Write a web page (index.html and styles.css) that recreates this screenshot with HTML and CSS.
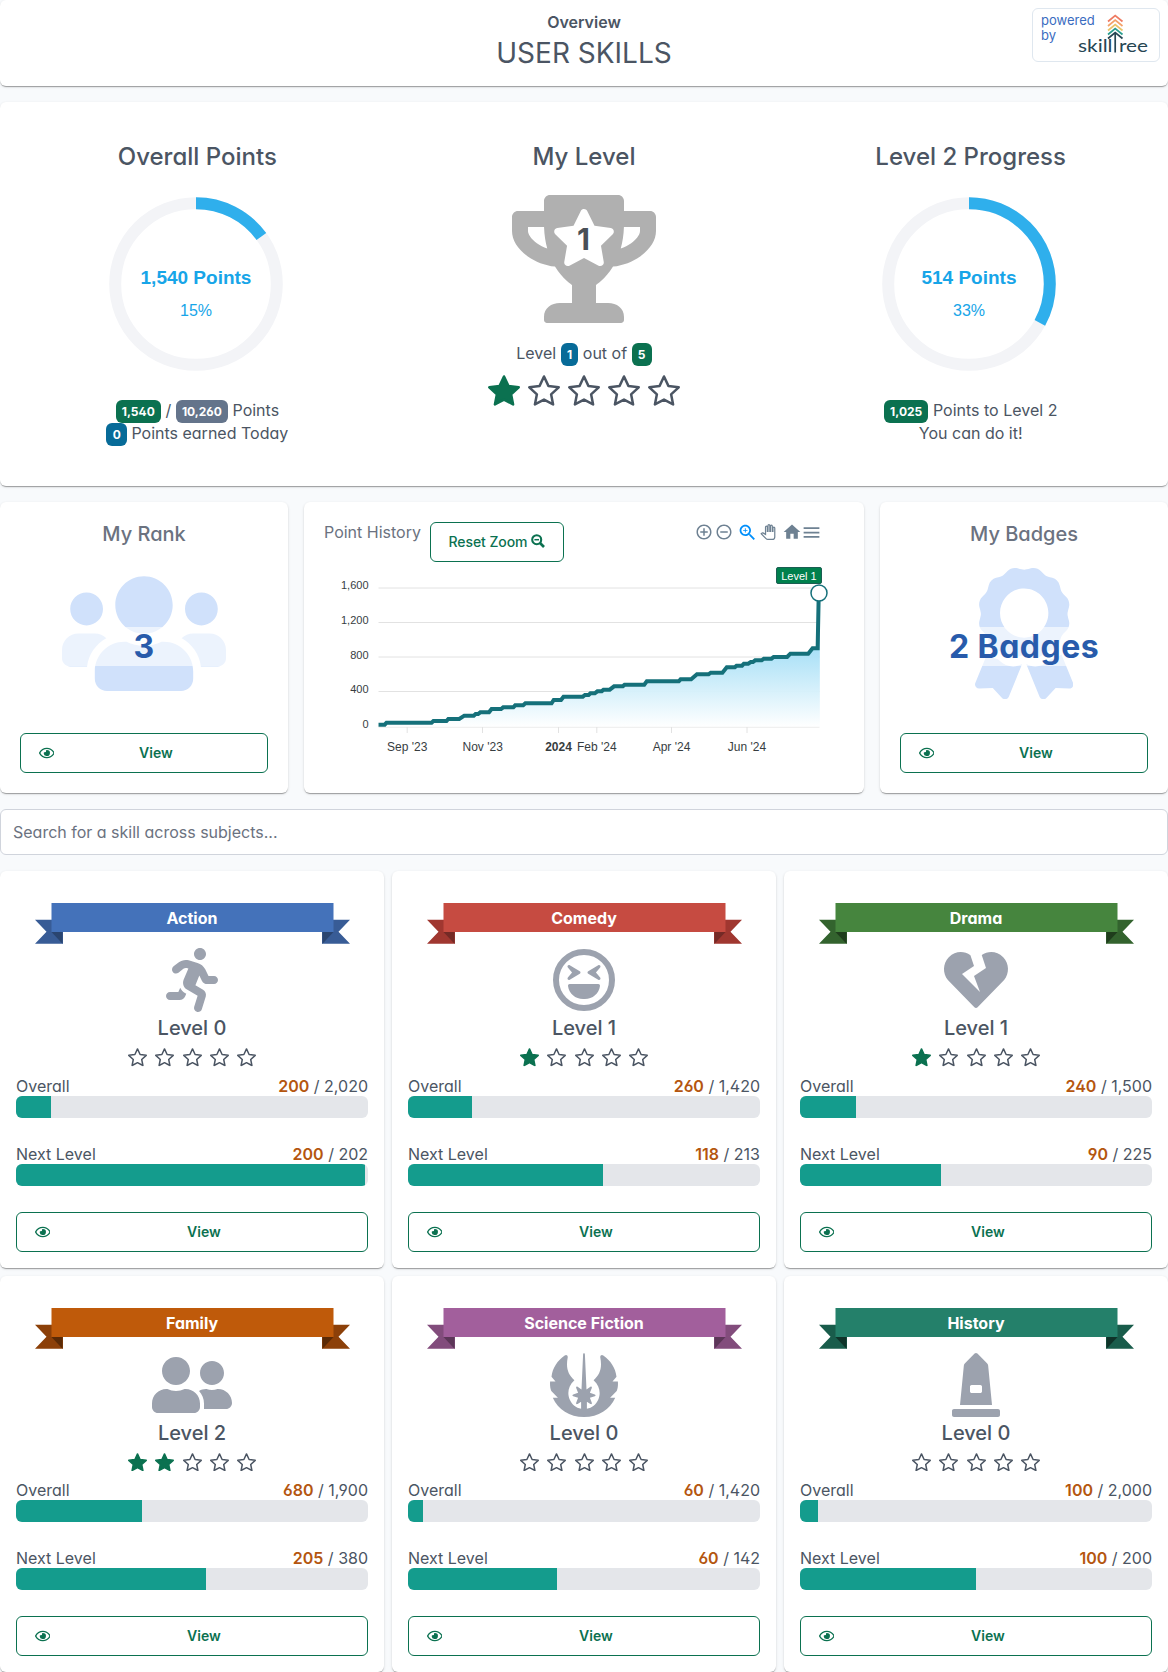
FILE: index.html
```html
<!DOCTYPE html>
<html lang="en">
<head>
<meta charset="utf-8">
<title>User Skills</title>
<link rel="stylesheet" href="styles.css">
</head>
<body>
<svg class="sprite" aria-hidden="true">
  <symbol id="star" viewBox="0 0 32 31"><path d="M16 1.5 20.4 10.9 30.7 12.3 23.1 19.3 25.1 29.4 16 24.6 6.9 29.4 8.9 19.3 1.3 12.3 11.6 10.9Z"/></symbol>
  <symbol id="eye" viewBox="0 0 576 512"><path d="M288 144a110.94 110.94 0 0 0-31.24 5 55.4 55.4 0 0 1 7.24 27 56 56 0 0 1-56 56 55.4 55.4 0 0 1-27-7.24A111.71 111.71 0 1 0 288 144zm284.52 97.4C518.29 135.59 410.93 64 288 64S57.68 135.64 3.48 241.41a32.35 32.35 0 0 0 0 29.19C57.71 376.41 165.07 448 288 448s230.32-71.64 284.52-177.41a32.35 32.35 0 0 0 0-29.19zM288 400c-98.65 0-189.09-55-237.93-144C98.91 167 189.34 112 288 112s189.09 55 237.93 144C477.1 345 386.66 400 288 400z"/></symbol>
  <symbol id="ribbon" viewBox="0 0 315 41">
    <path class="tail" d="M0 16.800H28V40.800H0L11.500 28.800ZM315 16.800H287V40.800H315L303.500 28.800Z"/>
    <path class="fold" d="M16.500 29H27.500V40.800ZM298.500 29H287.500V40.800Z"/>
    <path class="band" d="M16.500 0H298.500V29H16.500Z"/>
  </symbol>
  <symbol id="running" viewBox="0 0 416 512"><path d="M272 96c26.51 0 48-21.49 48-48S298.51 0 272 0s-48 21.49-48 48 21.49 48 48 48zM113.69 317.47l-14.8 34.52H32c-17.67 0-32 14.33-32 32s14.33 32 32 32h77.45c19.25 0 36.58-11.44 44.11-29.09l8.79-20.52-10.67-6.3c-17.32-10.23-30.06-25.37-37.99-42.61zM384 223.99h-44.03l-26.06-53.25c-12.5-25.55-35.45-44.23-61.78-50.94l-71.08-21.14c-28.3-6.8-57.77-.55-80.84 17.14l-39.67 30.41c-14.03 10.75-16.69 30.83-5.94 44.86s30.84 16.69 44.86 5.94l39.66-30.41c7.67-5.89 17.44-8 25.27-6.14l14.7 4.37-37.46 87.39c-12.62 29.48-1.31 64.01 26.3 80.31l84.98 50.17-27.47 87.73c-5.28 16.86 4.11 34.82 20.97 40.09 3.19 1 6.41 1.48 9.58 1.48 13.61 0 26.23-8.77 30.52-22.45l31.64-101.06c5.91-20.77-2.89-43.08-21.64-54.13l-61.24-36.14 31.31-78.28 20.27 41.43c8 16.34 24.92 26.89 43.11 26.89H384c17.67 0 32-14.33 32-32s-14.33-31.99-32-31.99z"/></symbol>
  <symbol id="laugh" viewBox="0 0 496 512"><circle cx="248" cy="256" r="224" fill="none" stroke="currentColor" stroke-width="48"/><path d="M343.6 196l33.6-40.3c8.6-10.3-3.8-24.8-15.4-18l-80 48c-7.8 4.7-7.8 15.9 0 20.6l80 48c11.5 6.8 24-7.6 15.4-18L343.6 196zm-209.4 58.3l80-48c7.8-4.7 7.8-15.9 0-20.6l-80-48c-11.6-6.9-24 7.7-15.4 18l33.6 40.3-33.6 40.3c-8.7 10.4 3.8 24.8 15.4 18zM362.4 288H133.6c-8.2 0-14.5 7-13.5 15 7.5 59.2 58.9 105 121.1 105h13.6c62.2 0 113.6-45.8 121.1-105 1-8-5.3-15-13.5-15z"/></symbol>
  <symbol id="heart" viewBox="0 0 512 512"><path d="M473.7 73.8l-2.4-2.5c-46-47-118-51.700-169.600-14.800L336 159.900l-96 64 48 128-144-144 96-64-28.600-86.500C159.700 19.600 87 24 40.700 71.400l-2.400 2.400C-10.400 123.600-12.500 202.900 31 256l212.100 218.600c7.100 7.300 18.600 7.300 25.700 0L481 255.900c43.500-53 41.400-132.300-7.300-182.100z"/></symbol>
  <symbol id="friends" viewBox="0 0 640 512"><path d="M192 256c61.9 0 112-50.1 112-112S253.9 32 192 32 80 82.1 80 144s50.1 112 112 112zm76.8 32h-8.3c-20.8 10-43.9 16-68.5 16s-47.6-6-68.5-16h-8.3C51.6 288 0 339.6 0 403.2V432c0 26.5 21.5 48 48 48h288c26.5 0 48-21.5 48-48v-28.8c0-63.6-51.6-115.2-115.2-115.2zM480 256c53 0 96-43 96-96s-43-96-96-96-96 43-96 96 43 96 96 96zm48 32h-3.8c-13.9 4.8-28.6 8-44.2 8s-30.3-3.2-44.2-8H432c-20.4 0-39.2 5.9-55.7 15.4 24.4 26.3 39.7 61.2 39.7 99.8v38.4c0 2.2-.5 4.3-.6 6.4H592c26.5 0 48-21.5 48-48 0-61.9-50.1-112-112-112z"/></symbol>
  <symbol id="jedi" viewBox="0 0 69 64">
    <path id="wing" d="M15.200 2.600C16.800 1.200 18.600 2.700 18.200 4.500C16.200 15 18.500 21.500 24.900 27.300C18.200 33.500 17.800 41 20.200 46.500C22.400 51.600 26.500 54.800 31.600 55.800V48.800L28.100 51C27 51.500 26.300 50.700 26.700 49.700L28.600 44.700L23.700 43.200C22.600 42.800 22.600 41.800 23.700 41.400L28.600 39.800L26.700 35C26.300 33.900 27.100 33.200 28.100 33.800L32 36.500L33.600 1.200Q34.500 -.6 34.500 .5V64C20 64 8.500 56.500 3.300 44.700H8.400L1.800 38C.5 35 .4 31.500 .6 28.400H6L2 23.800C3 15 8 7.500 15.200 2.600Z"/>
    <use href="#wing" transform="matrix(-1 0 0 1 69 0)"/>
  </symbol>
  <symbol id="monument" viewBox="0 0 384 512"><path d="M368 448H16c-8.840 0-16 7.160-16 16v32c0 8.840 7.160 16 16 16h352c8.840 0 16-7.160 16-16v-32c0-8.840-7.160-16-16-16zm-78.860-347.260a31.970 31.970 0 0 0-9.210-19.440L203.310 4.690c-6.250-6.250-16.380-6.250-22.630 0l-76.600 76.610a31.970 31.970 0 0 0-9.210 19.440L64 416h256l-30.860-315.260zM240 307.200c0 6.400-6.400 12.800-12.800 12.800h-70.400c-6.400 0-12.800-6.400-12.800-12.800v-38.400c0-6.400 6.400-12.800 12.800-12.800h70.400c6.400 0 12.800 6.400 12.800 12.800v38.400z"/></symbol>
</svg>

<main class="page">
  <header class="card header">
    <div class="header-side"></div>
    <div class="header-title">
      <div class="overview">Overview</div>
      <h1>USER SKILLS</h1>
    </div>
    <div class="header-side">
      <div class="powered">
        <div class="powered-text"><span>powered</span><span>by</span></div>
        <svg class="logo" width="74" height="42" viewBox="0 0 74 42">
          <g fill="none" stroke-width="1.700">
            <path stroke="#ef7b62" d="M30 7.500 37.200 1.500 44.500 7.500"/>
            <path stroke="#f3a26a" d="M30 12 37.200 6 44.500 12"/>
            <path stroke="#e9c46a" d="M30 16.500 37.200 10.500 44.500 16.500"/>
            <path stroke="#2a9d8f" d="M30 20.500 37.200 14.500 44.500 20.500"/>
            <path stroke="#264653" d="M30 24.500 37.200 18.500 44.500 24.500M37.200 18.500V38.500"/>
          </g>
          <text x="0" y="37.500" textLength="34.500" lengthAdjust="spacingAndGlyphs">skill</text>
          <text x="41" y="37.500" textLength="29" lengthAdjust="spacingAndGlyphs">ree</text>
        </svg>
      </div>
    </div>
  </header>

  <section class="card progress">
    <div class="stat">
      <h2>Overall Points</h2>
      <svg class="donut" width="174" height="174" viewBox="0 0 174 174">
        <circle class="ring" cx="87" cy="87" r="80.800"/>
        <circle class="arc" cx="87" cy="87" r="80.800" pathLength="100" stroke-dasharray="15 100" transform="rotate(-90 87 87)"/>
        <text class="points" x="87" y="87">1,540 Points</text>
        <text class="percent" x="87" y="118.500">15%</text>
      </svg>
      <div class="caption">
        <div><span class="badge green">1,540</span> / <span class="badge slate">10,260</span> Points</div>
        <div><span class="badge blue">0</span> Points earned Today</div>
      </div>
    </div>
    <div class="stat">
      <h2>My Level</h2>
      <svg class="trophy" width="144" height="128" viewBox="0 0 144 128">
        <path transform="scale(.25)" fill="#b0b0b0" d="M552 64H448V24c0-13.3-10.700-24-24-24H152c-13.300 0-24 10.700-24 24v40H24C10.700 64 0 74.700 0 88v56c0 35.700 22.500 72.400 61.900 100.700 31.500 22.700 69.800 37.100 110 41.700C203.300 338.500 240 360 240 360v72h-48c-35.300 0-64 20.700-64 56v12c0 6.600 5.400 12 12 12h296c6.600 0 12-5.400 12-12v-12c0-35.300-28.700-56-64-56h-48v-72s36.700-21.500 68.100-73.600c40.300-4.600 78.600-19 110-41.700 39.300-28.300 61.900-65 61.900-100.700V88c0-13.300-10.700-24-24-24zM99.300 192.800C74.900 175.200 64 155.600 64 144v-16h64.200c1 32.600 5.800 61.200 12.800 86.200-15.100-5.200-29.200-12.400-41.700-21.400zM512 144c0 16.100-17.700 36.100-35.300 48.800-12.500 9-26.700 16.200-41.800 21.400 7-25 11.800-53.600 12.800-86.200H512v16z"/>
        <path transform="translate(39.900 14) scale(.1115)" fill="#fff" d="M259.300 17.800L194 150.200 47.900 171.500c-26.200 3.800-36.700 36.100-17.700 54.600l105.700 103-25 145.500c-4.500 26.300 23.200 46 46.400 33.700L288 439.600l130.700 68.700c23.200 12.200 50.900-7.400 46.400-33.700l-25-145.500 105.700-103c19-18.500 8.500-50.800-17.700-54.600L382 150.200 316.700 17.800c-11.700-23.600-45.600-23.900-57.400 0z"/>
        <text x="71.500" y="55">1</text>
      </svg>
      <div class="caption level-caption">Level <span class="badge blue">1</span> out of <span class="badge green">5</span></div>
      <div class="stars big">
        <svg class="on"><use href="#star"/></svg><svg><use href="#star"/></svg><svg><use href="#star"/></svg><svg><use href="#star"/></svg><svg><use href="#star"/></svg>
      </div>
    </div>
    <div class="stat">
      <h2>Level 2 Progress</h2>
      <svg class="donut" width="174" height="174" viewBox="0 0 174 174">
        <circle class="ring" cx="87" cy="87" r="80.800"/>
        <circle class="arc" cx="87" cy="87" r="80.800" pathLength="100" stroke-dasharray="33 100" transform="rotate(-90 87 87)"/>
        <text class="points" x="87" y="87">514 Points</text>
        <text class="percent" x="87" y="118.500">33%</text>
      </svg>
      <div class="caption">
        <div><span class="badge green">1,025</span> Points to Level 2</div>
        <div>You can do it!</div>
      </div>
    </div>
  </section>

  <section class="widgets">
    <div class="card widget">
      <h3>My Rank</h3>
      <div class="emblem">
        <svg width="164" height="131.200" viewBox="0 0 640 512"><path d="M96 224c35.300 0 64-28.700 64-64s-28.700-64-64-64-64 28.700-64 64 28.700 64 64 64zm448 0c35.300 0 64-28.700 64-64s-28.700-64-64-64-64 28.700-64 64 28.700 64 64 64zm32 32h-64c-17.600 0-33.500 7.100-45.100 18.600 40.300 22.100 68.900 62 75.100 109.400h66c17.700 0 32-14.300 32-32v-32c0-35.300-28.700-64-64-64zm-256 0c61.900 0 112-50.100 112-112S381.900 32 320 32 208 82.100 208 144s50.100 112 112 112zm76.800 32h-8.300c-20.800 10-43.900 16-68.500 16s-47.600-6-68.500-16h-8.300C179.600 288 128 339.600 128 403.200V432c0 26.500 21.500 48 48 48h288c26.500 0 48-21.500 48-48v-28.800c0-63.600-51.600-115.200-115.200-115.200zm-223.700-13.400C161.500 263.100 145.600 256 128 256H64c-35.300 0-64 28.700-64 64v32c0 17.700 14.300 32 32 32h65.900c6.300-47.400 34.900-87.300 75.200-109.400z"/></svg>
        <div class="emblem-value">3</div>
      </div>
      <button class="btn"><svg class="eye"><use href="#eye"/></svg><span>View</span></button>
    </div>

    <div class="card history">
      <div class="history-head">
        <span class="history-title">Point History</span>
        <button class="btn reset">Reset Zoom
          <svg width="14" height="14" viewBox="0 0 14 14"><g fill="none" stroke="currentColor"><circle cx="5.700" cy="5.700" r="4.500" stroke-width="2.100"/><path d="M3.400 5.700H8" stroke-width="1.500"/><path d="M9 9 13 13" stroke-width="2.600"/></g></svg>
        </button>
        <div class="tools">
          <svg width="18" height="18" viewBox="0 0 24 24"><path d="M13 7h-2v4H7v2h4v4h2v-4h4v-2h-4V7zm-1-5C6.480 2 2 6.480 2 12s4.480 10 10 10 10-4.480 10-10S17.520 2 12 2zm0 18c-4.410 0-8-3.590-8-8s3.590-8 8-8 8 3.590 8 8-3.590 8-8 8z"/></svg>
          <svg width="18" height="18" viewBox="0 0 24 24"><path d="M7 11v2h10v-2H7zm5-9C6.480 2 2 6.480 2 12s4.480 10 10 10 10-4.480 10-10S17.520 2 12 2zm0 18c-4.410 0-8-3.590-8-8s3.590-8 8-8 8 3.590 8 8-3.590 8-8 8z"/></svg>
          <svg class="active" width="21" height="21" viewBox="0 0 24 24"><path d="M15.500 14h-.79l-.28-.27C15.410 12.590 16 11.110 16 9.500 16 5.910 13.090 3 9.500 3S3 5.910 3 9.500 5.910 16 9.500 16c1.610 0 3.090-.59 4.230-1.570l.27.28v.79l5 4.990L20.490 19l-4.990-5zm-6 0C7.010 14 5 11.990 5 9.500S7.010 5 9.500 5 14 7.010 14 9.500 11.990 14 9.500 14zM12 10h-2v2H9v-2H7V9h2V7h1v2h2v1z"/></svg>
          <svg class="pan" width="16" height="16" viewBox="-1 -1 26 26"><path d="M23 5.500V20c0 2.200-1.800 4-4 4h-7.300c-1.080 0-2.100-.43-2.850-1.190L1 14.830s1.260-1.230 1.300-1.250c.22-.19.49-.29.79-.29.22 0 .42.06.6.16.04.01 4.310 2.460 4.310 2.460V4c0-.83.67-1.500 1.500-1.500S11 3.170 11 4v7h1V1.500c0-.83.67-1.500 1.500-1.500S15 .67 15 1.500V11h1V2.500c0-.83.67-1.500 1.500-1.500s1.500.67 1.500 1.500V11h1V5.500c0-.83.67-1.500 1.500-1.500s1.500.67 1.500 1.500z"/></svg>
          <svg width="20" height="20" viewBox="0 0 24 24"><path d="M10 20v-6h4v6h5v-8h3L12 3 2 12h3v8z"/></svg>
          <svg width="21" height="21" viewBox="0 0 24 24"><path d="M3 18h18v-2H3v2zm0-5h18v-2H3v2zm0-7v2h18V6H3z"/></svg>
        </div>
      </div>
      <svg class="chart" width="520" height="200" viewBox="324 562 520 200">
        <defs><linearGradient id="area" gradientUnits="userSpaceOnUse" x1="0" y1="300" x2="0" y2="711"><stop offset="0" stop-color="#70d1f4"/><stop offset=".42" stop-color="#a3def6"/><stop offset="1" stop-color="#fff"/></linearGradient></defs>
        <path class="grid" d="M378.500 588H819.500M378.500 622.500H819.500M378.500 657H819.500M378.500 691.500H819.500M378.500 727H819.500M407.200 727V733M482.500 727V733M558.500 727V733M596.800 727V733M671.500 727V733M747 727V733"/>
        <g class="y-labels">
          <text x="368.500" y="589">1,600</text><text x="368.500" y="624">1,200</text><text x="368.500" y="659">800</text><text x="368.500" y="693">400</text><text x="368.500" y="728">0</text>
        </g>
        <g class="x-labels">
          <text x="407.200" y="751">Sep '23</text><text x="482.700" y="751">Nov '23</text><text class="year" x="558.500" y="751">2024</text><text x="596.800" y="751">Feb '24</text><text x="671.500" y="751">Apr '24</text><text x="746.900" y="751">Jun '24</text>
        </g>
        <g transform="translate(300 490) scale(.36352 .33333)">
          <path fill="url(#area)" opacity=".96" d="M216 704H233L238 698H362L367 693H403L408 687H438L452 677H478L483 672H490L496 667H520L527 657H553L559 652H587L592 646H614L620 640H692L698 630H718L725 620H778L784 615H794L799 610H811L818 604H830L835 599H852L864 589H888L893 584H947L954 574H1042L1047 568H1076L1092 553H1124L1130 548H1162L1174 532H1196L1201 527H1216L1221 521H1233L1240 516H1246L1252 511H1270L1276 506H1297L1303 501H1340L1349 491H1398L1410 475H1424L1427 310L1430 310V710H216Z"/>
          <path class="line" d="M216 704H233L238 698H362L367 693H403L408 687H438L452 677H478L483 672H490L496 667H520L527 657H553L559 652H587L592 646H614L620 640H692L698 630H718L725 620H778L784 615H794L799 610H811L818 604H830L835 599H852L864 589H888L893 584H947L954 574H1042L1047 568H1076L1092 553H1124L1130 548H1162L1174 532H1196L1201 527H1216L1221 521H1233L1240 516H1246L1252 511H1270L1276 506H1297L1303 501H1340L1349 491H1398L1410 475H1424L1427 310"/>
        </g>
        <circle class="marker" cx="819" cy="593" r="8"/>
        <rect x="776.500" y="567.500" width="45" height="16" rx="1.500" fill="#00804d" stroke="#1b5e52"/>
        <text class="flag" x="799" y="580">Level 1</text>
      </svg>
    </div>

    <div class="card widget">
      <h3>My Badges</h3>
      <div class="emblem">
        <svg width="98.400" height="131.200" viewBox="0 0 384 512"><path d="M97.120 362.630c-8.690-8.690-4.160-6.240-25.120-11.850-9.510-2.550-17.870-7.450-25.430-13.320L1.200 448.700c-4.390 10.770 3.810 22.470 15.430 22.030l52.690-2.010L105.560 507c8 8.440 22.040 5.810 26.430-4.960l52.050-127.620c-10.840 6.040-22.870 9.580-35.310 9.580-19.500 0-37.820-7.590-51.610-21.370zM382.800 448.700l-45.370-111.240c-7.560 5.880-15.920 10.770-25.430 13.320-21.070 5.640-16.450 3.180-25.120 11.850-13.790 13.780-32.120 21.370-51.620 21.370-12.440 0-24.470-3.550-35.310-9.580L252 502.040c4.390 10.770 18.440 13.400 26.430 4.960l36.250-38.280 52.690 2.010c11.620.44 19.820-11.270 15.430-22.030zM263 340c15.280-15.550 17.030-14.210 38.790-20.140 13.890-3.790 24.750-14.840 28.470-28.980 7.480-28.400 5.540-24.970 25.950-45.750 10.170-10.350 14.140-25.440 10.420-39.580-7.470-28.380-7.480-24.420 0-52.830 3.720-14.140-.25-29.230-10.420-39.580-20.410-20.780-18.470-17.360-25.950-45.750-3.720-14.140-14.580-25.190-28.470-28.980-27.880-7.610-24.520-5.620-44.950-26.410-10.170-10.350-25-14.400-38.890-10.610-27.870 7.600-23.980 7.610-51.900 0-13.890-3.790-28.720.25-38.890 10.610-20.410 20.780-17.050 18.800-44.940 26.410-13.890 3.790-24.750 14.840-28.470 28.980-7.470 28.390-5.540 24.970-25.950 45.750-10.170 10.350-14.150 25.440-10.420 39.580 7.470 28.360 7.480 24.400 0 52.820-3.720 14.140.25 29.230 10.420 39.590 20.410 20.780 18.470 17.350 25.950 45.750 3.720 14.140 14.580 25.190 28.470 28.980C104.600 325.960 106.270 325 121 340c13.230 13.470 33.840 15.880 49.740 5.820a39.676 39.676 0 0 1 42.530 0c15.890 10.060 36.500 7.650 49.730-5.820zM97.660 175.960c0-53.030 42.240-96.020 94.340-96.020s94.340 42.990 94.340 96.020-42.240 96.020-94.340 96.020-94.340-42.990-94.340-96.020z"/></svg>
        <div class="emblem-value">2 Badges</div>
      </div>
      <button class="btn"><svg class="eye"><use href="#eye"/></svg><span>View</span></button>
    </div>
  </section>

  <input class="search" type="text" placeholder="Search for a skill across subjects...">

  <section class="subjects">
    <article class="card subject action">
      <div class="ribbon"><svg><use href="#ribbon"/></svg><h4>Action</h4></div>
      <svg class="icon"><use href="#running"/></svg>
      <div class="level">Level 0</div>
      <div class="stars"><svg><use href="#star"/></svg><svg><use href="#star"/></svg><svg><use href="#star"/></svg><svg><use href="#star"/></svg><svg><use href="#star"/></svg></div>
      <div class="row"><span>Overall</span><span><b>200</b> / 2,020</span></div>
      <div class="bar"><div style="width:9.9%"></div></div>
      <div class="row next"><span>Next Level</span><span><b>200</b> / 202</span></div>
      <div class="bar"><div style="width:99.2%"></div></div>
      <button class="btn"><svg class="eye"><use href="#eye"/></svg><span>View</span></button>
    </article>
    <article class="card subject comedy">
      <div class="ribbon"><svg><use href="#ribbon"/></svg><h4>Comedy</h4></div>
      <svg class="icon"><use href="#laugh"/></svg>
      <div class="level">Level 1</div>
      <div class="stars"><svg class="on"><use href="#star"/></svg><svg><use href="#star"/></svg><svg><use href="#star"/></svg><svg><use href="#star"/></svg><svg><use href="#star"/></svg></div>
      <div class="row"><span>Overall</span><span><b>260</b> / 1,420</span></div>
      <div class="bar"><div style="width:18.2%"></div></div>
      <div class="row next"><span>Next Level</span><span><b>118</b> / 213</span></div>
      <div class="bar"><div style="width:55.4%"></div></div>
      <button class="btn"><svg class="eye"><use href="#eye"/></svg><span>View</span></button>
    </article>
    <article class="card subject drama">
      <div class="ribbon"><svg><use href="#ribbon"/></svg><h4>Drama</h4></div>
      <svg class="icon"><use href="#heart"/></svg>
      <div class="level">Level 1</div>
      <div class="stars"><svg class="on"><use href="#star"/></svg><svg><use href="#star"/></svg><svg><use href="#star"/></svg><svg><use href="#star"/></svg><svg><use href="#star"/></svg></div>
      <div class="row"><span>Overall</span><span><b>240</b> / 1,500</span></div>
      <div class="bar"><div style="width:15.9%"></div></div>
      <div class="row next"><span>Next Level</span><span><b>90</b> / 225</span></div>
      <div class="bar"><div style="width:40%"></div></div>
      <button class="btn"><svg class="eye"><use href="#eye"/></svg><span>View</span></button>
    </article>
    <article class="card subject family">
      <div class="ribbon"><svg><use href="#ribbon"/></svg><h4>Family</h4></div>
      <svg class="icon"><use href="#friends"/></svg>
      <div class="level">Level 2</div>
      <div class="stars"><svg class="on"><use href="#star"/></svg><svg class="on"><use href="#star"/></svg><svg><use href="#star"/></svg><svg><use href="#star"/></svg><svg><use href="#star"/></svg></div>
      <div class="row"><span>Overall</span><span><b>680</b> / 1,900</span></div>
      <div class="bar"><div style="width:35.8%"></div></div>
      <div class="row next"><span>Next Level</span><span><b>205</b> / 380</span></div>
      <div class="bar"><div style="width:54%"></div></div>
      <button class="btn"><svg class="eye"><use href="#eye"/></svg><span>View</span></button>
    </article>
    <article class="card subject scifi">
      <div class="ribbon"><svg><use href="#ribbon"/></svg><h4>Science Fiction</h4></div>
      <svg class="icon"><use href="#jedi"/></svg>
      <div class="level">Level 0</div>
      <div class="stars"><svg><use href="#star"/></svg><svg><use href="#star"/></svg><svg><use href="#star"/></svg><svg><use href="#star"/></svg><svg><use href="#star"/></svg></div>
      <div class="row"><span>Overall</span><span><b>60</b> / 1,420</span></div>
      <div class="bar"><div style="width:4.2%"></div></div>
      <div class="row next"><span>Next Level</span><span><b>60</b> / 142</span></div>
      <div class="bar"><div style="width:42.300%"></div></div>
      <button class="btn"><svg class="eye"><use href="#eye"/></svg><span>View</span></button>
    </article>
    <article class="card subject past">
      <div class="ribbon"><svg><use href="#ribbon"/></svg><h4>History</h4></div>
      <svg class="icon"><use href="#monument"/></svg>
      <div class="level">Level 0</div>
      <div class="stars"><svg><use href="#star"/></svg><svg><use href="#star"/></svg><svg><use href="#star"/></svg><svg><use href="#star"/></svg><svg><use href="#star"/></svg></div>
      <div class="row"><span>Overall</span><span><b>100</b> / 2,000</span></div>
      <div class="bar"><div style="width:5%"></div></div>
      <div class="row next"><span>Next Level</span><span><b>100</b> / 200</span></div>
      <div class="bar"><div style="width:50%"></div></div>
      <button class="btn"><svg class="eye"><use href="#eye"/></svg><span>View</span></button>
    </article>
  </section>
</main>
</body>
</html>
```
FILE: styles.css
```css
* { box-sizing: border-box; }
body {
  margin: 0;
  background: #f8fafc;
  color: #4b5563;
  font: 400 16px/20px Inter, "Liberation Sans", sans-serif;
  font-feature-settings: "cv02", "cv03", "cv04", "cv11";
}
h1, h2, h3, h4 { margin: 0; }
svg { display: block; flex: none; }
.sprite { width: 0; height: 0; position: absolute; }
.page { display: flex; flex-direction: column; gap: 16px; height: 1672px; overflow: hidden; }
.page > * { flex: none; }
.card {
  background: #fff;
  border-radius: 6px;
  box-shadow: 0 2px 1px -1px rgba(0,0,0,.2), 0 1px 1px 0 rgba(0,0,0,.14), 0 1px 3px 0 rgba(0,0,0,.12);
}

/* header */
.header { display: flex; height: 86px; }
.header-side { flex: 1; display: flex; justify-content: flex-end; padding: 8px 8px 0 0; }
.header-title { text-align: center; padding-top: 12px; }
.overview { font-weight: 600; }
h1 { font-size: 28px; line-height: 34px; font-weight: 400; padding-top: 4px; }
.powered {
  display: flex; width: 128px; height: 54px; padding: 4px 0 0 8px;
  border: 1px solid #dfe7ef; border-radius: 6px;
}
.powered-text {
  display: flex; flex-direction: column; align-items: flex-start;
  width: 37px; font-size: 13px; line-height: 15px; color: #3a6cbf;
}
.logo { margin-top: 1px; }
.logo text { font: 400 18px Lato, sans-serif; fill: #264653; }

/* overall progress */
.progress { display: grid; grid-template-columns: repeat(3, 1fr); gap: 16px; height: 384px; padding: 39px 12px 0; }
.stat { display: flex; flex-direction: column; align-items: center; text-align: center; }
h2 { font-size: 24px; line-height: 32px; font-weight: 500; }
.donut { margin: 24px 2.600px 0 0; }
.ring, .arc { fill: none; stroke-width: 12px; stroke: #f3f4f7; }
.arc { stroke: #2fafec; }
.donut text { font-family: "Liberation Sans", sans-serif; fill: #17a5e8; text-anchor: middle; }
.points { font-size: 19px; font-weight: 700; }
.percent { font-size: 16px; }
.caption { margin-top: 29px; }
.badge {
  display: inline-block; height: 23px; padding: 0 6.200px; border-radius: 6px;
  font-size: 12px; line-height: 23px; font-weight: 700; color: #fff;
}
.green { background: #0b7150; }
.slate { background: #64748b; }
.blue { background: #076b98; }
.trophy { margin-top: 22px; }
.trophy text { font: 700 30px Inter, sans-serif; fill: #495057; text-anchor: middle; }
.level-caption { margin-top: 20px; }
.stars { display: flex; justify-content: center; gap: 8.200px; margin-top: 5px; }
.stars svg { width: 19px; height: 18.500px; fill: none; stroke: #4b5563; stroke-width: 2.500px; stroke-linejoin: round; }
.stars .on { fill: #0b7150; stroke: #0b7150; }
.stars.big { gap: 8px; margin-top: 8.500px; }
.stars.big svg { width: 32px; height: 31px; }

/* widgets */
.widgets { display: grid; grid-template-columns: 288px 1fr 288px; gap: 16px; height: 291px; }
.widget { display: flex; flex-direction: column; padding: 20px 20px 0; text-align: center; }
h3 { font-size: 20px; line-height: 24px; font-weight: 500; color: #6b7280; }
.emblem { display: grid; justify-items: center; margin-top: 22px; height: 131px; }
.emblem > * { grid-area: 1 / 1; }
.emblem svg { fill: #d0e1fb; }
.emblem-value {
  justify-self: stretch; z-index: 1; margin-top: 59px; height: 39px;
  font-size: 32px; line-height: 39px; font-weight: 700; color: #285bab; letter-spacing: .45px;
  background: rgba(255,255,255,.6);
}
.btn {
  display: flex; align-items: center; gap: 8px; height: 40px; padding: 0 17.500px;
  border: 1px solid #0b7150; border-radius: 6px; background: #fff; color: #0b7150;
  font: inherit; font-feature-settings: inherit; font-size: 14px; font-weight: 600;
}
.btn span { flex: 1; text-align: center; }
.btn svg { fill: currentColor; }
.eye { width: 15.750px; height: 14px; }
.widget .btn { margin-top: 34px; }
.history { padding: 20px 20px 0; }
.history-head { display: flex; height: 40px; }
.history-title { color: #6b7280; font-size: 16px; line-height: 20px; width: 106px; white-space: nowrap; }
.btn.reset { width: 134px; gap: 4px; font-weight: 500; letter-spacing: -.08px; white-space: nowrap; justify-content: center; padding: 0; }
.reset svg { margin-top: -3px; }
.tools { display: flex; align-items: center; height: 20px; margin-left: auto; padding-right: 22px; }
.tools svg { fill: #6e8192; margin-left: 2px; }
.tools svg.active { fill: #008ffb; margin-left: 4px; }
.tools svg.pan { fill: #fff; stroke: #6e8192; stroke-width: 2px; margin: 0 4px 0 2px; }
.tools svg:last-child { margin-left: -.5px; }
.chart text { font-family: "Liberation Sans", sans-serif; font-feature-settings: normal; fill: #373d3f; }
.grid { stroke: #e2e2e2; fill: none; }
.y-labels text { font-size: 11px; text-anchor: end; fill: #373d3f; }
.x-labels text { font-size: 12px; text-anchor: middle; }
.x-labels .year { font-weight: 700; }
.line { fill: none; stroke: #15707a; stroke-width: 4px; vector-effect: non-scaling-stroke; }
.marker { fill: #fff; stroke: #15707a; stroke-width: 1.500px; }
.chart .flag { font-size: 11px; fill: #fff; text-anchor: middle; }

/* search */
.search {
  height: 46px; padding: 0 12px; border: 1px solid #d0d4dc; border-radius: 6px; background: #fff;
  font: inherit; font-feature-settings: inherit;
}
.search::placeholder { color: #6b7280; opacity: 1; }

/* subjects */
.subjects { display: grid; grid-template-columns: repeat(3, 1fr); gap: 8px; }
.subject { display: flex; flex-direction: column; height: 396.670px; padding: 32px 16px 0; }
.ribbon { display: grid; justify-items: center; height: 41px; margin-bottom: 4px; }
.ribbon > * { grid-area: 1 / 1; }
.ribbon svg { width: 315px; height: 41px; }
.ribbon h4 { color: #fff; font-size: 16px; line-height: 30px; font-weight: 700; z-index: 1; }
.band { fill: var(--band); }
.tail { fill: var(--tail); }
.fold { fill: var(--fold); }
.action { --band: #4472ba; --tail: #385c96; --fold: #2a4570; }
.comedy { --band: #c64b41; --tail: #a03730; --fold: #742a26; }
.drama { --band: #46853e; --tail: #33632e; --fold: #1f3d1c; }
.family { --band: #bf5a0a; --tail: #8c4009; --fold: #5a2a06; }
.scifi { --band: #a25f9c; --tail: #824c7c; --fold: #5c3658; }
.past { --band: #24806a; --tail: #195c4b; --fold: #0f3329; }
.icon { width: 100%; height: 64px; fill: currentColor; color: #9ca2ae; }
.level { font-size: 20px; line-height: 30px; font-weight: 500; text-align: center; padding-top: 1px; }
.row { display: flex; justify-content: space-between; margin-top: 9px; }
.row.next { margin-top: 26px; }
.row b { font-weight: 600; color: #b4560f; }
.bar { height: 22px; border-radius: 6px; background: #e4e6ea; overflow: hidden; }
.bar div { height: 100%; background: #149c8d; }
.subject .btn { margin-top: 26px; }
```
